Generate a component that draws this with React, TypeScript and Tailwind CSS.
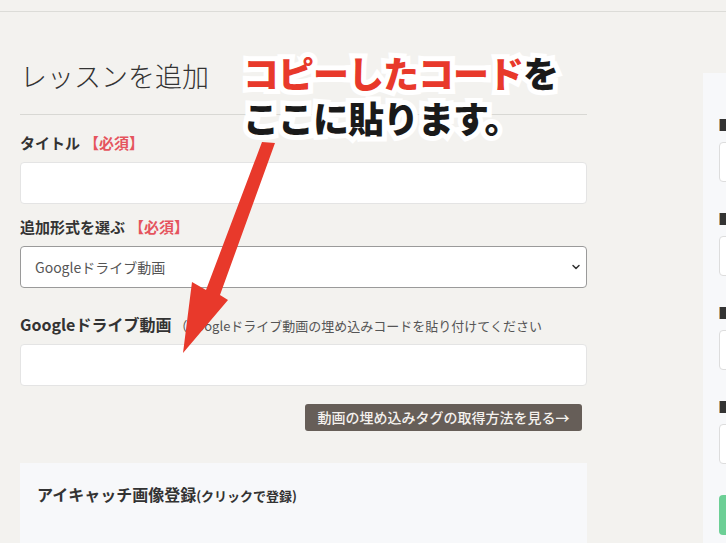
import React from "react";
import {ChevronDown} from "lucide-react";

const jp = {fontFamily: '"Noto Sans CJK JP", "Noto Sans", sans-serif'};

const Required = () => (
    <span className="text-[#e5545d] font-bold ml-1">【必須】</span>
);

const RightPanel = () => {
    const rows = [0, 1, 2, 3];
    return (
        <div className="w-[300px] shrink-0 mt-[61px] bg-[#f7f8fa] px-4 pt-[46px]">
            {rows.map((r) => (
                <div key={r} className="mb-[31px]">
                    <div className="w-3 h-3 mb-[11px] bg-[#333] border-l border-[#c8a36b]" />
                    <div className="h-10 bg-white border border-[#ddd] rounded" />
                </div>
            ))}
            <div className="h-10 bg-[#6ccf95] rounded mt-px" />
        </div>
    );
};

const App = () => {
    return (
        <div className="relative w-full h-[543px] overflow-hidden bg-[#f3f2ef] text-[#333]" style={jp}>
            <div className="h-3 border-b border-[#dcdcd8]" />
            <div className="flex">
                <div className="w-[567px] ml-5 shrink-0">
                    <h1 className="mt-[44px] text-[27px] font-light leading-[40px] text-[#333]">レッスンを追加</h1>
                    <div className="mt-[18px] border-b border-[#d8d8d4]" />

                    <div className="mt-[17px] text-[15px] font-bold leading-[22px]">
                        タイトル<Required />
                    </div>
                    <div className="mt-[8px] h-[42px] bg-white border border-[#e4e4e4] rounded" />

                    <div className="mt-[12px] text-[15px] font-bold leading-[22px]">
                        追加形式を選ぶ<Required />
                    </div>
                    <div className="relative mt-[8px]">
                        <select
                            className="w-full h-[42px] appearance-none bg-white border border-[#9a9a9a] rounded pl-[14px] text-[14px] text-[#555] outline-none"
                            style={jp}
                            defaultValue="gd"
                        >
                            <option value="gd">Googleドライブ動画</option>
                        </select>
                        <ChevronDown className="absolute right-[5px] top-[15px] w-3 h-3 text-[#333] pointer-events-none" strokeWidth={3} />
                    </div>

                    <div className="mt-[24px] flex items-baseline leading-[24px]">
                        <span className="text-[16px] font-bold">Googleドライブ動画</span>
                        <span className="ml-[3px] text-[13px] text-[#555]">（Googleドライブ動画の埋め込みコードを貼り付けてください</span>
                    </div>
                    <div className="mt-[6px] h-[42px] bg-white border border-[#e4e4e4] rounded" />

                    <div className="flex justify-end pr-[5px] mt-[18px]">
                        <button className="h-[27px] w-[277px] bg-[#665e58] text-[#f4f1ee] text-[14px] font-medium rounded-[3px] leading-[27px]">
                            動画の埋め込みタグの取得方法を見る→
                        </button>
                    </div>

                    <div className="mt-[32px] h-[120px] bg-[#f7f8fa] px-[17px] pt-[19px]">
                        <span className="text-[16px] font-bold">アイキャッチ画像登録</span>
                        <span className="text-[13px] font-bold">(クリックで登録)</span>
                    </div>
                </div>
                <div className="w-[116px] shrink-0" />
                <RightPanel />
            </div>

            {/* annotation overlay */}
            <div
                className="absolute left-[243px] top-[50px] text-[36px] font-black leading-[45px] tracking-[-1px]"
                style={{...jp, WebkitTextStroke: "10px #ffffff", paintOrder: "stroke fill"}}
            >
                <div>
                    <span className="text-[#e8392b]">コピーしたコード</span>
                    <span className="text-[#1a1a1a]">を</span>
                </div>
                <div className="text-[#1a1a1a]">ここに貼ります。</div>
            </div>
            <svg className="absolute left-0 top-0 pointer-events-none" width="726" height="543" viewBox="0 0 726 543">
                <polygon points="262,142 275,143 220,295 228,300 183,353 192,282 206,290" fill="#e8392b" />
            </svg>
        </div>
    );
};

export default App;
